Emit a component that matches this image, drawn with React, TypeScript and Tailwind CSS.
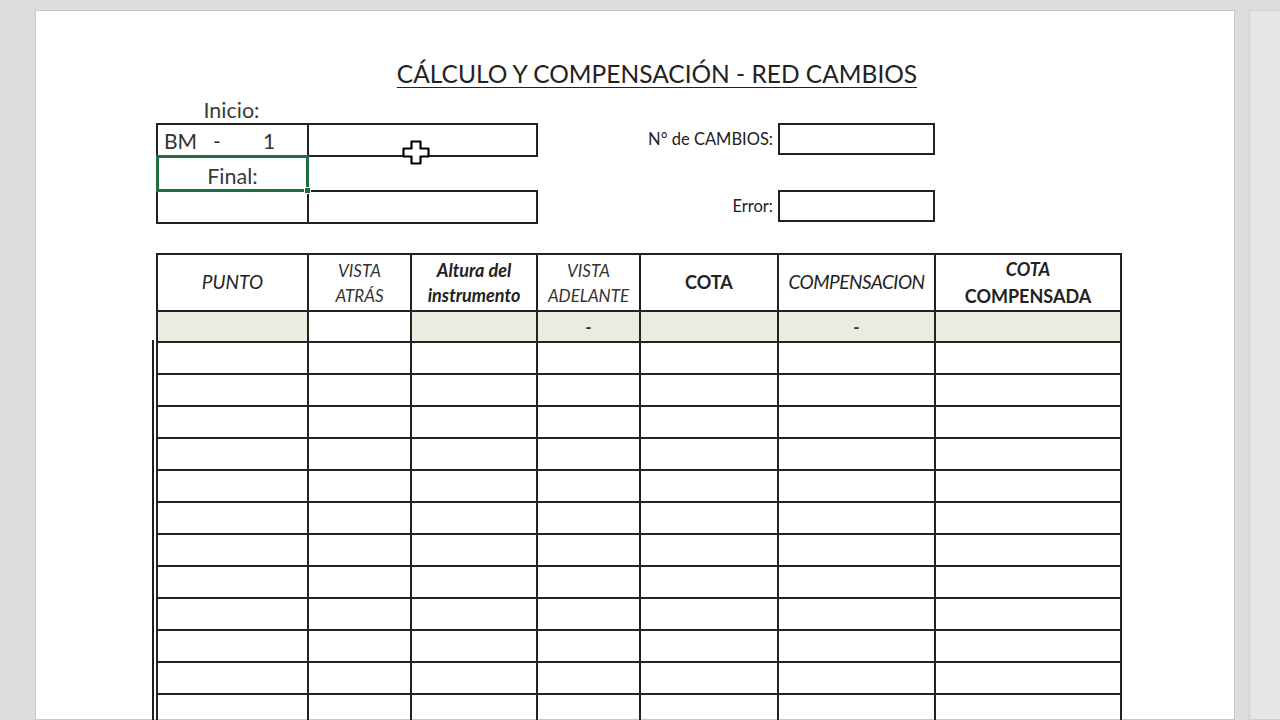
import React from 'react';

const font = { fontFamily: 'Lato, "Liberation Sans", sans-serif' };

const cols = [151, 103, 126, 103, 138, 157, 186];

function MoveCursor() {
  return (
    <svg width="28" height="25" viewBox="0 0 28 25" className="absolute left-[366px] top-[41px]">
      <path
        d="M9.5 1.5h9v7h8v8h-8v7h-9v-7h-8v-8h8z"
        fill="#fff"
        stroke="#000"
        strokeWidth="2.2"
        strokeLinejoin="round"
      />
    </svg>
  );
}

function TopForm() {
  return (
    <div className="relative flex items-start" style={font}>
      <div className="ml-[120px] w-[382px]">
        <div className="w-[151px] text-center text-[21.5px] text-[#3a3a3a] h-[24px] leading-[22px]">Inicio:</div>
        <table className="border-collapse">
          <tbody>
            <tr className="h-[32px]">
              <td className="w-[151px] border-2 border-[#222] px-[6px] text-[21px] text-[#333] leading-none">
                <span>BM</span>
                <span className="ml-[16px]">-</span>
                <span className="ml-[42px]">1</span>
              </td>
              <td className="w-[231px] border-2 border-[#222]"></td>
            </tr>
            <tr className="h-[35px]">
              <td className="relative border-x-2 border-[#222] pt-[5px] text-center text-[21.5px] leading-[28px] text-[#3a3a3a] outline-[3px] outline-[#1f6e43] -outline-offset-2">
                Final:
                <span className="absolute right-[-4px] bottom-[-4px] h-[7px] w-[7px] bg-[#1f6e43] border border-white"></span>
              </td>
              <td className="border-l-2 border-[#222]"></td>
            </tr>
            <tr className="h-[32px]">
              <td className="border-2 border-[#222]"></td>
              <td className="border-2 border-[#222]"></td>
            </tr>
          </tbody>
        </table>
      </div>
      <div className="ml-[85px] mt-[24px] grid grid-cols-[150px_157px] items-center gap-x-[5px] gap-y-[35px]">
        <div className="text-right text-[16.5px] text-[#222]">N° de CAMBIOS:</div>
        <div className="h-[32px] border-2 border-[#222]"></div>
        <div className="text-right text-[16.5px] text-[#222]">Error:</div>
        <div className="h-[32px] border-2 border-[#222]"></div>
      </div>
      <MoveCursor />
    </div>
  );
}

function MainTable() {
  const rows = Array.from({ length: 13 });
  return (
    <div className="mt-[29px] ml-[116px] flex items-start" style={font}>
      <div className="mt-[87px] mr-[2px] h-[420px] w-[2px] bg-[#222]"></div>
      <table className="border-collapse table-fixed">
        <colgroup>
          {cols.map((w, i) => (
            <col key={i} style={{ width: w }} />
          ))}
        </colgroup>
        <thead>
          <tr className="h-[57px] text-[#222]">
            <th className="border-2 border-[#222] font-normal italic text-[19px]">PUNTO</th>
            <th className="border-2 border-[#222] font-normal italic text-[17px] leading-[25px] text-[#333]">
              VISTA
              <br />
              ATRÁS
            </th>
            <th className="border-2 border-[#222] font-bold italic text-[18px] leading-[25px]">
              Altura del
              <br />
              instrumento
            </th>
            <th className="border-2 border-[#222] font-normal italic text-[17px] leading-[25px] text-[#333]">
              VISTA
              <br />
              ADELANTE
            </th>
            <th className="border-2 border-[#222] font-bold text-[18px]">COTA</th>
            <th className="border-2 border-[#222] font-normal italic text-[19px] tracking-[-0.5px]">COMPENSACION</th>
            <th className="border-2 border-[#222] font-bold text-[18px] leading-[27px]">
              <span className="italic">COTA</span>
              <br />
              COMPENSADA
            </th>
          </tr>
        </thead>
        <tbody>
          <tr className="h-[31px] bg-[#ebecdf] text-[17px] font-bold text-[#333]">
            <td className="border-2 border-[#222]"></td>
            <td className="border-2 border-[#222] bg-white"></td>
            <td className="border-2 border-[#222]"></td>
            <td className="border-2 border-[#222] text-center">-</td>
            <td className="border-2 border-[#222]"></td>
            <td className="border-2 border-[#222] text-center">-</td>
            <td className="border-2 border-[#222]"></td>
          </tr>
          {rows.map((_, r) => (
            <tr key={r} className="h-[32px]">
              {cols.map((_, c) => (
                <td key={c} className="border-2 border-[#222]"></td>
              ))}
            </tr>
          ))}
        </tbody>
      </table>
    </div>
  );
}

export default function App() {
  return (
    <div className="flex h-[720px] w-[1280px] overflow-hidden bg-[#dcdcdc]">
      <div className="ml-[35px] mt-[10px] w-[1200px] shrink-0 border border-[#c9c9c9] bg-white">
        <h1
          className="mt-[48px] text-center text-[24.5px] leading-[30px] text-[#222] underline underline-offset-[4px] decoration-1 pl-[44px]"
          style={font}
        >
          CÁLCULO Y COMPENSACIÓN - RED CAMBIOS
        </h1>
        <div className="mt-[10px]">
          <TopForm />
        </div>
        <MainTable />
      </div>
      <div className="ml-[14px] mt-[10px] w-[60px] shrink-0 border border-[#cfcfcf] bg-[#e6e6e6]"></div>
    </div>
  );
}
